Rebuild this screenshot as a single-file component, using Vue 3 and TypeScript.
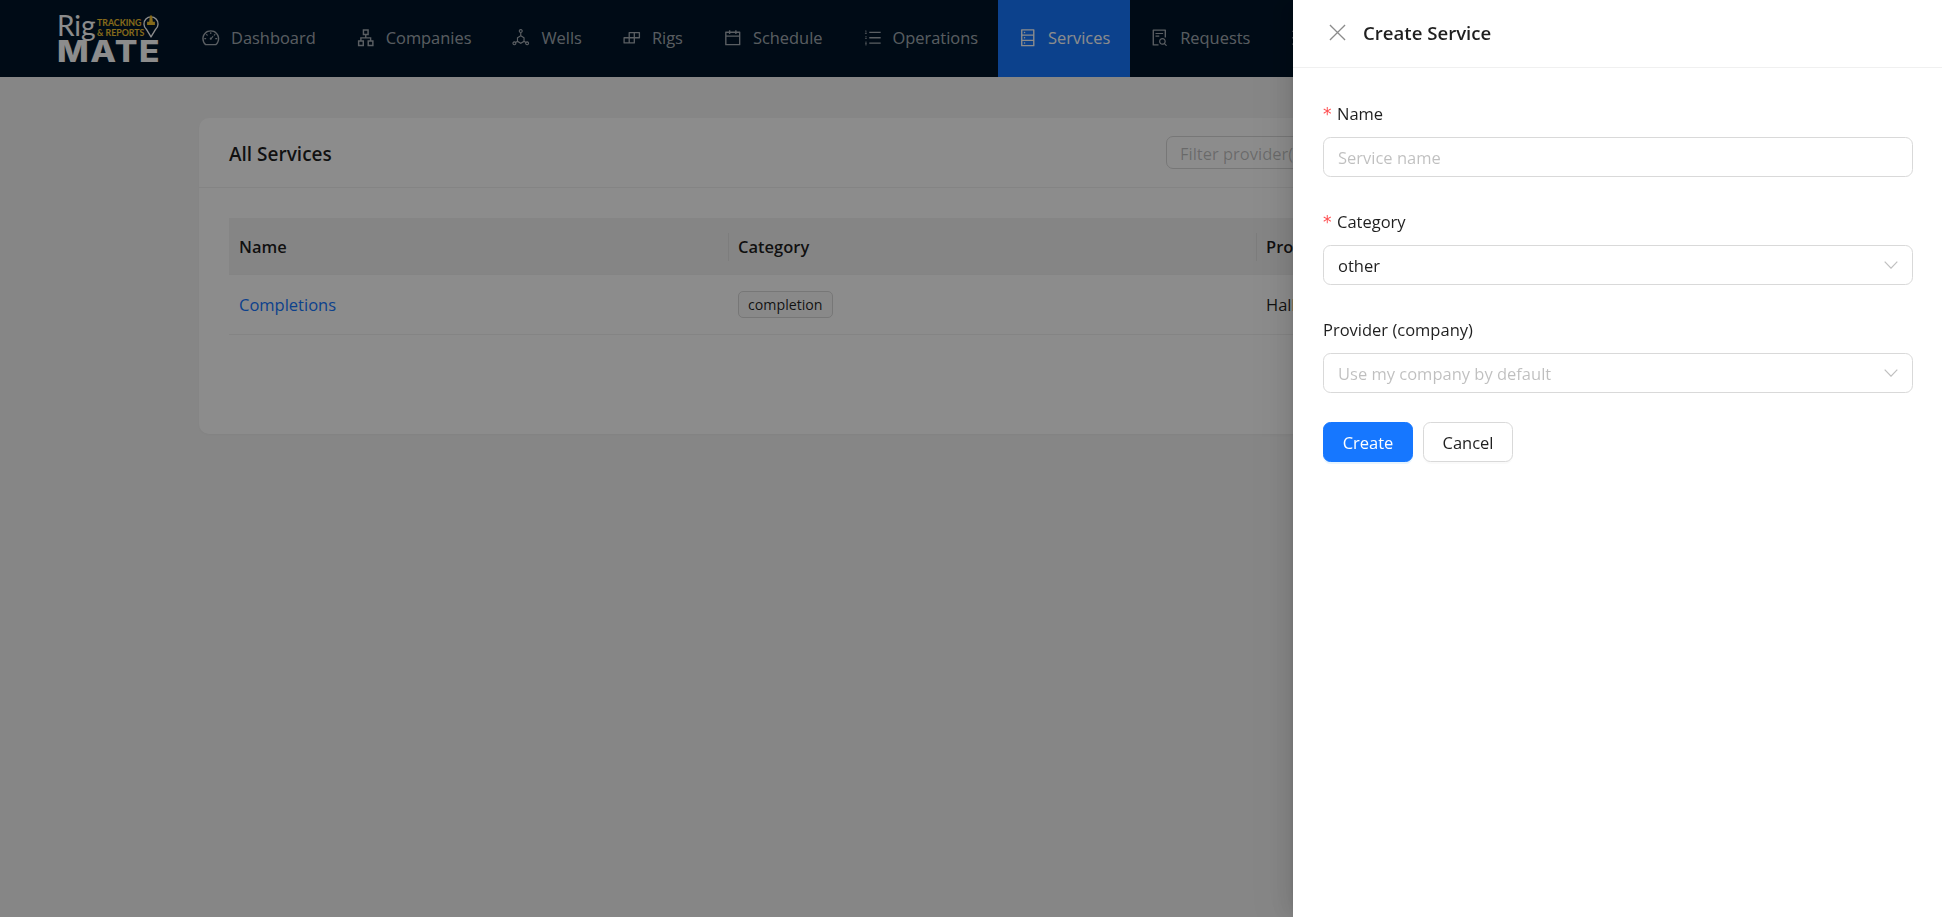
<template>
  <div class="page">
    <header class="topbar">
      <div class="logo">
        <div class="logo-top">
          <span class="logo-rig">Rig</span>
          <span class="logo-tag">
            <span>TRACKING</span>
            <span>&amp; REPORTS</span>
          </span>
          <svg class="logo-pin" viewBox="0 0 30 48">
            <path d="M15 46 L6 31 A13.5 13.5 0 1 1 24 31 Z" fill="none" stroke="#fff" stroke-width="2.6" stroke-linejoin="round" />
            <path d="M13 5h4l1.5 12h4v6H7.5v-6h4z" fill="#f2c230" />
          </svg>
        </div>
        <div class="logo-mate">MATE</div>
      </div>

      <nav class="nav">
        <a
          v-for="item in navItems"
          :key="item.label"
          class="nav-item"
          :class="{ active: item.label === 'Services' }"
        >
          <svg class="nav-icon" :class="{ lined: item.lined }" viewBox="0 0 1024 1024">
            <path :d="item.icon" />
          </svg>
          <span>{{ item.label }}</span>
        </a>
        <a class="nav-item">
          <svg class="nav-icon" viewBox="0 0 1024 1024">
            <path d="M120 140h784v72H120zM120 476h784v72H120zM120 812h784v72H120z" />
          </svg>
        </a>
      </nav>
    </header>

    <main class="content">
      <section class="card">
        <div class="card-head">
          <h3 class="card-title">All Services</h3>
          <div class="filter">Filter provider(s)</div>
        </div>
        <div class="card-body">
          <table class="table">
            <colgroup>
              <col class="col-name" />
              <col class="col-category" />
              <col />
            </colgroup>
            <thead>
              <tr>
                <th>Name</th>
                <th>Category</th>
                <th>Provider</th>
              </tr>
            </thead>
            <tbody>
              <tr v-for="row in services" :key="row.name">
                <td><a class="link">{{ row.name }}</a></td>
                <td><span class="tag">{{ row.category }}</span></td>
                <td>{{ row.provider }}</td>
              </tr>
            </tbody>
          </table>
        </div>
      </section>
    </main>

    <!-- Drawer -->
    <div class="mask"></div>
    <aside class="drawer">
      <header class="drawer-head">
        <svg class="drawer-close" viewBox="0 0 18 18">
          <path d="M1 1l16 16M17 1L1 17" />
        </svg>
        <h2 class="drawer-title">Create Service</h2>
      </header>
      <form class="drawer-body" @submit.prevent>
        <div class="field">
          <label class="label"><i class="req">*</i>Name</label>
          <input class="control" type="text" placeholder="Service name" />
        </div>
        <div class="field">
          <label class="label"><i class="req">*</i>Category</label>
          <div class="control select">
            <span>other</span>
            <svg class="chevron" viewBox="0 0 14 8"><path d="M.7.7 7 7.2 13.3.7" /></svg>
          </div>
        </div>
        <div class="field last">
          <label class="label">Provider (company)</label>
          <div class="control select placeholder">
            <span>Use my company by default</span>
            <svg class="chevron" viewBox="0 0 14 8"><path d="M.7.7 7 7.2 13.3.7" /></svg>
          </div>
        </div>
        <div class="actions">
          <button class="btn primary" type="submit">Create</button>
          <button class="btn" type="button">Cancel</button>
        </div>
      </form>
    </aside>
  </div>
</template>

<script setup lang="ts">
interface NavItem {
  label: string;
  icon: string;
  lined?: boolean;
}

const navItems: NavItem[] = [
  {
    label: 'Dashboard',
    icon: 'M924.8 385.6a446.7 446.7 0 0 0-96-142.4 446.7 446.7 0 0 0-142.4-96C631.1 123.8 572.5 112 512 112s-119.1 11.8-174.4 35.2a446.7 446.7 0 0 0-142.4 96 446.7 446.7 0 0 0-96 142.4C75.8 440.9 64 499.5 64 560c0 132.7 58.3 257.7 159.9 343.1l1.7 1.4c5.8 4.8 13.1 7.5 20.6 7.5h531.7c7.5 0 14.8-2.7 20.6-7.5l1.7-1.4C901.7 817.7 960 692.7 960 560c0-60.5-11.8-119.1-35.2-174.4zM761.4 836H262.6A371.12 371.12 0 0 1 140 560c0-99.4 38.7-192.8 109-263 70.3-70.3 163.7-109 263-109 99.4 0 192.8 38.7 263 109 70.3 70.3 109 163.7 109 263 0 105.6-44.5 205.5-122.6 276zM623.5 421.5a8.03 8.03 0 0 0-11.3 0L527.7 506c-18.7-5-39.4-.2-54.1 14.5a55.95 55.95 0 0 0 0 79.2 55.95 55.95 0 0 0 79.2 0 55.87 55.87 0 0 0 14.5-54.1l84.5-84.5c3.1-3.1 3.1-8.2 0-11.3l-28.3-28.3zM490 320h44c4.4 0 8-3.6 8-8v-80c0-4.4-3.6-8-8-8h-44c-4.4 0-8 3.6-8 8v80c0 4.4 3.6 8 8 8zm260 218v44c0 4.4 3.6 8 8 8h80c4.4 0 8-3.6 8-8v-44c0-4.4-3.6-8-8-8h-80c-4.4 0-8 3.6-8 8zm12.7-197.2l-31.1-31.1a8.03 8.03 0 0 0-11.3 0l-56.6 56.6a8.03 8.03 0 0 0 0 11.3l31.1 31.1c3.1 3.1 8.2 3.1 11.3 0l56.6-56.6c3.1-3.1 3.1-8.2 0-11.3zm-458.6-31.1a8.03 8.03 0 0 0-11.3 0l-31.1 31.1a8.03 8.03 0 0 0 0 11.3l56.6 56.6c3.1 3.1 8.2 3.1 11.3 0l31.1-31.1c3.1-3.1 3.1-8.2 0-11.3l-56.6-56.6zM262 530h-80c-4.4 0-8 3.6-8 8v44c0 4.4 3.6 8 8 8h80c4.4 0 8-3.6 8-8v-44c0-4.4-3.6-8-8-8z',
  },
  {
    label: 'Companies',
    icon: 'M908 640H804V488c0-4.4-3.6-8-8-8H548v-96h108c8.8 0 16-7.2 16-16V80c0-8.8-7.2-16-16-16H368c-8.8 0-16 7.2-16 16v288c0 8.8 7.2 16 16 16h108v96H228c-4.4 0-8 3.6-8 8v152H116c-8.8 0-16 7.2-16 16v288c0 8.8 7.2 16 16 16h288c8.8 0 16-7.2 16-16V656c0-8.8-7.2-16-16-16H292v-88h440v88H620c-8.8 0-16 7.2-16 16v288c0 8.8 7.2 16 16 16h288c8.8 0 16-7.2 16-16V656c0-8.8-7.2-16-16-16zm-564 76v168H176V716h168zm84-408V140h168v168H428zm420 576H680V716h168v168z',
  },
  {
    label: 'Wells',
    lined: true,
    icon: 'M512 84a76 76 0 1 0 .1 0zM512 236v172M512 408 340 510v190l172 100 172-100V510zM340 700l-98 56M684 700l98 56M178 730a76 76 0 1 0 .1 0zM846 730a76 76 0 1 0 .1 0z',
  },
  {
    label: 'Rigs',
    icon: 'M916 210H376c-17.7 0-32 14.3-32 32v236H108c-17.7 0-32 14.3-32 32v272c0 17.7 14.3 32 32 32h540c17.7 0 32-14.3 32-32V546h236c17.7 0 32-14.3 32-32V242c0-17.7-14.3-32-32-32zm-504 68h200v200H412V278zm-68 468H144V546h200v200zm268 0H412V546h200v200zm268-268H680V278h200v200z',
  },
  {
    label: 'Schedule',
    icon: 'M880 184H712v-64c0-4.4-3.6-8-8-8h-56c-4.4 0-8 3.6-8 8v64H384v-64c0-4.4-3.6-8-8-8h-56c-4.4 0-8 3.6-8 8v64H144c-17.7 0-32 14.3-32 32v664c0 17.7 14.3 32 32 32h736c17.7 0 32-14.3 32-32V216c0-17.7-14.3-32-32-32zm-40 656H184V460h656v380zM184 392V256h128v48c0 4.4 3.6 8 8 8h56c4.4 0 8-3.6 8-8v-48h256v48c0 4.4 3.6 8 8 8h56c4.4 0 8-3.6 8-8v-48h128v136H184z',
  },
  {
    label: 'Operations',
    icon: 'M920 760H336c-4.4 0-8 3.6-8 8v56c0 4.4 3.6 8 8 8h584c4.4 0 8-3.6 8-8v-56c0-4.4-3.6-8-8-8zm0-568H336c-4.4 0-8 3.6-8 8v56c0 4.4 3.6 8 8 8h584c4.4 0 8-3.6 8-8v-56c0-4.4-3.6-8-8-8zm0 284H336c-4.4 0-8 3.6-8 8v56c0 4.4 3.6 8 8 8h584c4.4 0 8-3.6 8-8v-56c0-4.4-3.6-8-8-8zM120 136h56v40h-56zM136 176h40v72h-40zM100 256h100v40H100zM110 440h90v40h-90zM110 540h90v40h-90zM110 716h90v40h-90zM110 790h90v34h-90zM110 860h90v40h-90z',
  },
  {
    label: 'Services',
    icon: 'M832 64H192c-17.7 0-32 14.3-32 32v832c0 17.7 14.3 32 32 32h640c17.7 0 32-14.3 32-32V96c0-17.7-14.3-32-32-32zm-600 72h560v208H232V136zm560 480H232V408h560v208zm0 272H232V680h560v208zM304 240a40 40 0 1 0 80 0 40 40 0 1 0-80 0zm0 272a40 40 0 1 0 80 0 40 40 0 1 0-80 0zm0 272a40 40 0 1 0 80 0 40 40 0 1 0-80 0z',
  },
  {
    label: 'Requests',
    icon: 'M688 312v-48c0-4.4-3.6-8-8-8H296c-4.4 0-8 3.6-8 8v48c0 4.4 3.6 8 8 8h384c4.4 0 8-3.6 8-8zm-392 88c-4.4 0-8 3.6-8 8v48c0 4.4 3.6 8 8 8h184c4.4 0 8-3.6 8-8v-48c0-4.4-3.6-8-8-8H296zm144 452H208V148h560v344c0 4.4 3.6 8 8 8h56c4.4 0 8-3.6 8-8V108c0-17.7-14.3-32-32-32H168c-17.7 0-32 14.3-32 32v784c0 17.7 14.3 32 32 32h272c4.4 0 8-3.6 8-8v-56c0-4.4-3.6-8-8-8zm445.7 51.5l-93.3-93.3C814.7 780.7 828 743.9 828 704c0-97.2-78.8-176-176-176s-176 78.8-176 176 78.8 176 176 176c35.8 0 69-10.7 96.8-29l94.7 94.7c1.6 1.6 3.6 2.3 5.6 2.3s4.1-.8 5.6-2.3l31-31a7.9 7.9 0 0 0 0-11.2zM652 816c-61.9 0-112-50.1-112-112s50.1-112 112-112 112 50.1 112 112-50.1 112-112 112z',
  },
];

const services = [
  { name: 'Completions', category: 'completion', provider: 'Halliburton' },
];
</script>

<style scoped>
.page {
  height: 917px;
  overflow: hidden;
  background: #f5f5f5;
  color: rgba(0, 0, 0, 0.88);
  font-family: 'Open Sans', 'Noto Sans', sans-serif;
  font-size: 16.5px;
}

/* Top bar */
.topbar {
  display: flex;
  align-items: stretch;
  height: 77px;
  background: #001529;
  padding-left: 57px;
  overflow: hidden;
}

.logo {
  width: 124px;
  flex-shrink: 0;
  padding-top: 12px;
}

.logo-top {
  display: flex;
  align-items: flex-start;
  height: 27px;
}

.logo-rig {
  width: 40px;
  font-size: 28px;
  line-height: 27px;
  color: #fff;
  font-family: 'Lato', sans-serif;
}

.logo-tag {
  display: flex;
  flex-direction: column;
  width: 46px;
  margin-top: 6px;
  font-family: 'Lato', sans-serif;
  font-size: 8.8px;
  font-weight: 700;
  line-height: 10px;
  color: #f2c230;
  white-space: nowrap;
}

.logo-pin {
  width: 16px;
  height: 25px;
  margin-top: 1px;
  flex-shrink: 0;
}

.logo-mate {
  width: 104px;
  font-family: 'Inter', sans-serif;
  font-weight: 800;
  font-size: 30px;
  line-height: 24px;
  letter-spacing: 1.4px;
  color: #fff;
  transform: scaleX(1.12);
  transform-origin: left center;
}

.nav {
  display: flex;
  font-size: 16.42px;
}

.nav-item {
  display: flex;
  align-items: center;
  gap: 10.5px;
  padding: 0 20px 2px;
  color: rgba(255, 255, 255, 0.65);
  white-space: nowrap;
}

.nav-item.active {
  background: #1677ff;
  color: #fff;
}

.nav-icon {
  width: 19.5px;
  height: 19.5px;
  flex-shrink: 0;
  fill: currentColor;
}

.nav-icon.lined {
  fill: none;
  stroke: currentColor;
  stroke-width: 60;
}

/* Card with table */
.content {
  padding: 41px 199px 0;
}

.card {
  height: 316px;
  background: #fff;
  border-radius: 10px;
  box-shadow: 0 1px 3px rgba(0, 0, 0, 0.04);
}

.card-head {
  display: flex;
  align-items: center;
  justify-content: space-between;
  height: 69px;
  padding: 0 30px;
  border-bottom: 1px solid #f0f0f0;
}

.card-title {
  margin: 2px 0 0;
  font-size: 19px;
  font-weight: 600;
}

.filter {
  width: 547px;
  height: 33px;
  box-sizing: border-box;
  padding-left: 13px;
  line-height: 33px;
  border: 1px solid #d9d9d9;
  border-radius: 7px;
  color: rgba(0, 0, 0, 0.25);
}

.card-body {
  padding: 30px;
}

.table {
  width: 100%;
  table-layout: fixed;
  border-collapse: collapse;
}

.col-name { width: 499px; }
.col-category { width: 528px; }

.table th {
  position: relative;
  height: 56px;
  padding: 0 10px;
  text-align: left;
  font-weight: 600;
  background: #f2f2f2;
  border-bottom: 1px solid #f0f0f0;
}

.table th + th::before {
  content: '';
  position: absolute;
  left: 0;
  top: 15px;
  width: 1px;
  height: 28px;
  background: rgba(0, 0, 0, 0.06);
}

.table td {
  height: 59px;
  padding: 0 10px;
  border-bottom: 1px solid #f0f0f0;
}

.link {
  color: #1677ff;
}

.tag {
  display: inline-block;
  height: 27px;
  box-sizing: border-box;
  padding: 0 9px;
  font-size: 14.2px;
  line-height: 25px;
  background: #fafafa;
  border: 1px solid #d9d9d9;
  border-radius: 5px;
}

/* Drawer */
.mask {
  position: fixed;
  inset: 0;
  background: rgba(0, 0, 0, 0.45);
}

.drawer {
  position: fixed;
  top: 0;
  right: 0;
  bottom: 0;
  width: 649px;
  background: #fff;
  box-shadow:
    -7.5px 0 20px 0 rgba(0, 0, 0, 0.08),
    -3.75px 0 7.5px -5px rgba(0, 0, 0, 0.12),
    -11px 0 35px 10px rgba(0, 0, 0, 0.05);
}

.drawer-head {
  display: flex;
  align-items: center;
  gap: 17px;
  box-sizing: border-box;
  height: 68px;
  padding: 0 0 2px 36px;
  border-bottom: 1px solid #f0f0f0;
}

.drawer-close {
  width: 17px;
  height: 17px;
  fill: none;
  stroke: rgba(0, 0, 0, 0.45);
  stroke-width: 1.4;
}

.drawer-title {
  margin: 0;
  font-size: 18.6px;
  font-weight: 600;
}

.drawer-body {
  padding: 31px 29px 0 30px;
}

.field {
  display: flex;
  flex-direction: column;
  margin-bottom: 30px;
}

.field.last {
  margin-bottom: 29px;
}

.label {
  display: flex;
  align-items: center;
  box-sizing: border-box;
  height: 28px;
  padding-top: 1px;
  margin-bottom: 10px;
}

.req {
  width: 14px;
  flex-shrink: 0;
  font-style: normal;
  font-family: 'DejaVu Sans', sans-serif;
  font-size: 17px;
  color: #ff4d4f;
}

.control {
  height: 40px;
  box-sizing: border-box;
  width: 100%;
  padding: 0 14px;
  font: inherit;
  color: inherit;
  background: #fff;
  border: 1px solid #d9d9d9;
  border-radius: 7.5px;
  outline: none;
}

.control::placeholder,
.placeholder {
  color: rgba(0, 0, 0, 0.25);
}

.select {
  display: flex;
  align-items: center;
  justify-content: space-between;
}

.chevron {
  width: 14px;
  height: 8px;
  fill: none;
  stroke: rgba(0, 0, 0, 0.25);
  stroke-width: 1.2;
}

.actions {
  display: flex;
  gap: 10px;
}

.btn {
  width: 90px;
  height: 40px;
  padding: 0;
  font: inherit;
  color: inherit;
  background: #fff;
  border: 1px solid #d9d9d9;
  border-radius: 7.5px;
  box-shadow: 0 2px 0 rgba(0, 0, 0, 0.02);
}

.btn.primary {
  color: #fff;
  background: #1677ff;
  border-color: #1677ff;
  box-shadow: 0 2px 0 rgba(5, 145, 255, 0.1);
}
</style>

<style>
html,
body {
  margin: 0;
  overflow: hidden;
}
</style>
